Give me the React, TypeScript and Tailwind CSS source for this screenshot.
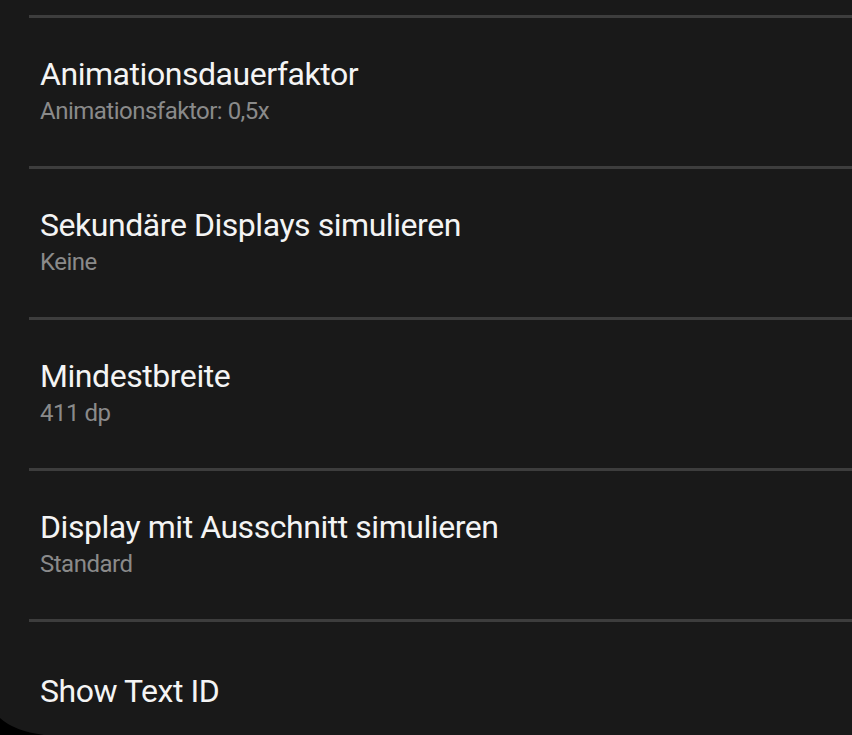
const rows: { title: string; sub?: string }[] = [
  { title: 'Animationsdauerfaktor', sub: 'Animationsfaktor: 0,5x' },
  { title: 'Sekundäre Displays simulieren', sub: 'Keine' },
  { title: 'Mindestbreite', sub: '411 dp' },
  { title: 'Display mit Ausschnitt simulieren', sub: 'Standard' },
  { title: 'Show Text ID' },
];

export default function App() {
  return (
    <div className="relative h-[735px] w-[852px] overflow-hidden bg-[#191919] pt-[15px] font-['Roboto',sans-serif]">
      {rows.map((row) => (
        <div key={row.title} className="h-[151px]">
          <div className="ml-[29px] h-[3px] bg-[#3d3d3d]" />
          <div className={row.sub ? 'pl-10 pt-[38px]' : 'pl-10 pt-[51px]'}>
            <div className="text-[32px] leading-[36px] tracking-[-0.45px] text-[#f4f4f4]">{row.title}</div>
            {row.sub && (
              <div className="mt-[5px] text-[24px] leading-[28px] tracking-[-0.5px] text-[#8a8a8a]">{row.sub}</div>
            )}
          </div>
        </div>
      ))}
      {/* rounded screen corner */}
      <svg className="absolute bottom-0 left-0" width="60" height="30" viewBox="0 0 60 30">
        <path d="M0 13 Q 14 26 44 30 L0 30 Z" fill="#000" />
      </svg>
    </div>
  );
}
